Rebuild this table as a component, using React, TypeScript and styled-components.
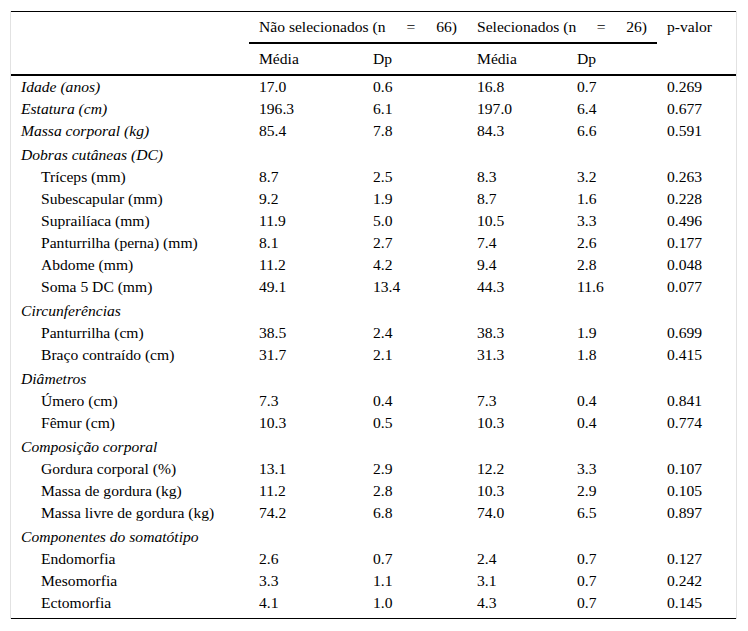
import React from "react"
import styled, { createGlobalStyle } from "styled-components"

type Row = {
  label: string
  values: string[]
}

type Section = {
  title: string
  rows?: Row[]
  values?: string[]
}

const serif = `"Liberation Serif", "Times New Roman", Times, serif`

const GlobalStyle = createGlobalStyle`
  html, body {
    margin: 0;
    padding: 0;
    background: #fff;
  }
  body {
    font-family: ${serif};
    color: #000;
  }
`

const Frame = styled.div`
  margin: 11px 0 0 10px;
  width: 725px;
  border-left: 1px solid #e2e2e2;
  border-right: 1px solid #e2e2e2;
`

const Table = styled.table`
  width: 100%;
  border-collapse: separate;
  border-spacing: 0;
  table-layout: fixed;
  border-top: 1px solid #000;
  border-bottom: 1px solid #000;
  font-family: ${serif};
  font-size: 15.6px;
  color: #000;
`

const HeadCell = styled.th<{ $underline?: boolean; $top?: boolean }>`
  padding: 0 10px;
  line-height: 30px;
  font-family: ${serif};
  font-weight: normal;
  text-align: left;
  white-space: nowrap;
  vertical-align: ${(p) => (p.$top ? "top" : "middle")};
  border-bottom: ${(p) => (p.$underline ? "2px solid #000" : "none")};
`

const Spread = styled.span`
  display: flex;
  justify-content: space-between;
`

const Cell = styled.td<{ $italic?: boolean; $indent?: boolean; $gap?: boolean; $last?: boolean }>`
  padding: ${(p) => (p.$gap ? "2px" : "0")} 10px ${(p) => (p.$last ? "4px" : "0")}
    ${(p) => (p.$indent ? "30px" : "10px")};
  line-height: 22px;
  font-family: ${serif};
  font-style: ${(p) => (p.$italic ? "italic" : "normal")};
  white-space: nowrap;
  vertical-align: top;
`

const sections: Section[] = [
  { title: "Idade (anos)", values: ["17.0", "0.6", "16.8", "0.7", "0.269"] },
  { title: "Estatura (cm)", values: ["196.3", "6.1", "197.0", "6.4", "0.677"] },
  { title: "Massa corporal (kg)", values: ["85.4", "7.8", "84.3", "6.6", "0.591"] },
  {
    title: "Dobras cutâneas (DC)",
    rows: [
      { label: "Tríceps (mm)", values: ["8.7", "2.5", "8.3", "3.2", "0.263"] },
      { label: "Subescapular (mm)", values: ["9.2", "1.9", "8.7", "1.6", "0.228"] },
      { label: "Suprailíaca (mm)", values: ["11.9", "5.0", "10.5", "3.3", "0.496"] },
      { label: "Panturrilha (perna) (mm)", values: ["8.1", "2.7", "7.4", "2.6", "0.177"] },
      { label: "Abdome (mm)", values: ["11.2", "4.2", "9.4", "2.8", "0.048"] },
      { label: "Soma 5 DC (mm)", values: ["49.1", "13.4", "44.3", "11.6", "0.077"] },
    ],
  },
  {
    title: "Circunferências",
    rows: [
      { label: "Panturrilha (cm)", values: ["38.5", "2.4", "38.3", "1.9", "0.699"] },
      { label: "Braço contraído (cm)", values: ["31.7", "2.1", "31.3", "1.8", "0.415"] },
    ],
  },
  {
    title: "Diâmetros",
    rows: [
      { label: "Úmero (cm)", values: ["7.3", "0.4", "7.3", "0.4", "0.841"] },
      { label: "Fêmur (cm)", values: ["10.3", "0.5", "10.3", "0.4", "0.774"] },
    ],
  },
  {
    title: "Composição corporal",
    rows: [
      { label: "Gordura corporal (%)", values: ["13.1", "2.9", "12.2", "3.3", "0.107"] },
      { label: "Massa de gordura (kg)", values: ["11.2", "2.8", "10.3", "2.9", "0.105"] },
      { label: "Massa livre de gordura (kg)", values: ["74.2", "6.8", "74.0", "6.5", "0.897"] },
    ],
  },
  {
    title: "Componentes do somatótipo",
    rows: [
      { label: "Endomorfia", values: ["2.6", "0.7", "2.4", "0.7", "0.127"] },
      { label: "Mesomorfia", values: ["3.3", "1.1", "3.1", "0.7", "0.242"] },
      { label: "Ectomorfia", values: ["4.1", "1.0", "4.3", "0.7", "0.145"] },
    ],
  },
]

export default function App() {
  let body: React.ReactNode[] = []
  sections.forEach((s, i) => {
    if (s.values) {
      body.push(
        <tr key={s.title}>
          <Cell $italic>{s.title}</Cell>
          {s.values.map((v, j) => (
            <Cell key={j}>{v}</Cell>
          ))}
        </tr>
      )
      return
    }
    body.push(
      <tr key={s.title}>
        <Cell $italic $gap colSpan={6}>
          {s.title}
        </Cell>
      </tr>
    )
    const lastSection = i === sections.length - 1
    s.rows!.forEach((r, k) => {
      const last = lastSection && k === s.rows!.length - 1
      body.push(
        <tr key={`${s.title}${r.label}`}>
          <Cell $indent $last={last}>
            {r.label}
          </Cell>
          {r.values.map((v, j) => (
            <Cell key={j} $last={last}>
              {v}
            </Cell>
          ))}
        </tr>
      )
    })
  })

  return (
    <>
      <GlobalStyle />
      <Frame>
        <Table>
          <colgroup>
            <col style={{ width: 238 }} />
            <col style={{ width: 114 }} />
            <col style={{ width: 104 }} />
            <col style={{ width: 100 }} />
            <col style={{ width: 90 }} />
            <col style={{ width: 79 }} />
          </colgroup>
          <thead>
            <tr>
              <HeadCell rowSpan={2} $underline />
              <HeadCell colSpan={2} $underline>
                <Spread>
                  <span>Não selecionados (n</span>
                  <span>=</span>
                  <span>66)</span>
                </Spread>
              </HeadCell>
              <HeadCell colSpan={2} $underline>
                <Spread>
                  <span>Selecionados (n</span>
                  <span>=</span>
                  <span>26)</span>
                </Spread>
              </HeadCell>
              <HeadCell rowSpan={2} $underline $top>
                p-valor
              </HeadCell>
            </tr>
            <tr>
              <HeadCell $underline>Média</HeadCell>
              <HeadCell $underline>Dp</HeadCell>
              <HeadCell $underline>Média</HeadCell>
              <HeadCell $underline>Dp</HeadCell>
            </tr>
          </thead>
          <tbody>{body}</tbody>
        </Table>
      </Frame>
    </>
  )
}
